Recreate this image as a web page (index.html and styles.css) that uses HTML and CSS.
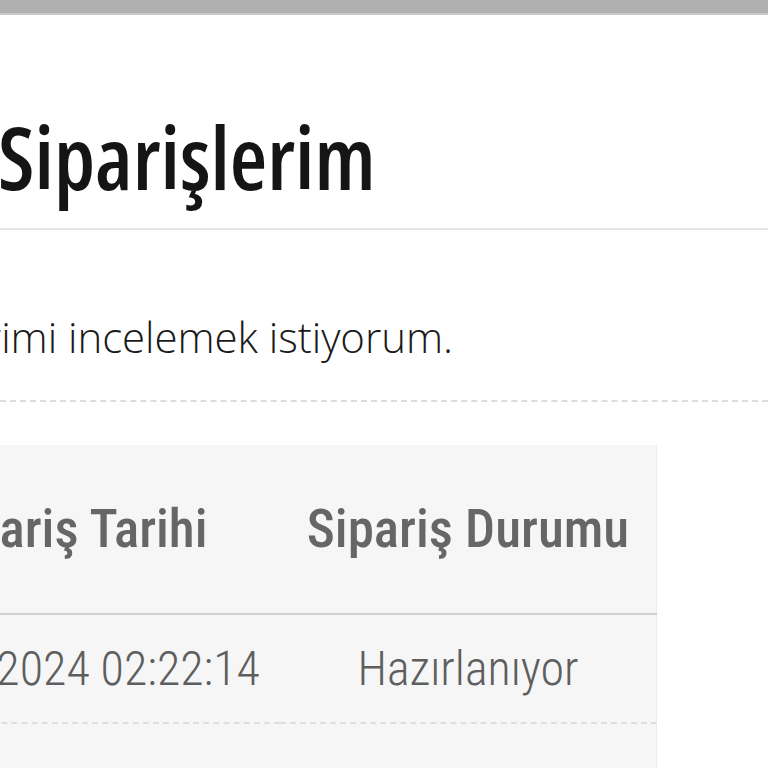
FILE: index.html
```html
<!DOCTYPE html>
<html lang="tr">
<head>
<meta charset="utf-8">
<title>Siparişlerim</title>
<link rel="stylesheet" href="styles.css">
</head>
<body>
<div class="topbar"></div>
<main class="page">
  <header class="title-block">
    <h1 class="title">Siparişlerim</h1>
  </header>
  <section class="intro">
    <div class="intro-line"><p class="intro-text">Siparişlerimi incelemek istiyorum.</p></div>
  </section>
  <div class="table-wrap">
    <table class="orders">
      <thead>
        <tr>
          <th class="col-date">Sipariş Tarihi</th>
          <th class="col-status">Sipariş Durumu</th>
        </tr>
      </thead>
      <tbody>
        <tr>
          <td class="col-date">15.03.2024 02:22:14</td>
          <td class="col-status">Hazırlanıyor</td>
        </tr>
        <tr class="empty-row">
          <td class="col-date">&nbsp;</td>
          <td class="col-status">&nbsp;</td>
        </tr>
      </tbody>
    </table>
  </div>
</main>
</body>
</html>
```
FILE: styles.css
```css
html, body {
  margin: 0;
  padding: 0;
  background: #ffffff;
  overflow: hidden;
  width: 768px;
  height: 768px;
}

.topbar {
  height: 13px;
  background: #b0b0b0;
  border-bottom: 2px solid #c9c9c9;
}

.page {
  display: flex;
  flex-direction: column;
}

.title-block {
  padding-top: 90px;
  padding-bottom: 20px;
  border-bottom: 2px solid #e6e6e6;
}

.title {
  margin: 0 0 0 -2px;
  font-family: "Open Sans", Lato, sans-serif;
  font-weight: 600;
  font-stretch: 85%;
  font-size: 86px;
  line-height: 103px;
  color: #151515;
}

.intro {
  padding-top: 77px;
  padding-bottom: 33px;
  border-bottom: 2px dashed #dcdcdc;
}

.intro-line {
  width: 453px;
  display: flex;
  justify-content: flex-end;
}

.intro-text {
  margin: 0;
  white-space: nowrap;
  font-family: "Open Sans", Lato, sans-serif;
  font-weight: 300;
  font-size: 42px;
  letter-spacing: -0.05px;
  line-height: 60px;
  color: #1a1a1a;
}

.table-wrap {
  padding-top: 43px;
}

.orders {
  margin-left: -140px;
  border-collapse: collapse;
  background: #f6f6f6;
  border-right: 1px solid #ececec;
  font-family: Roboto, "DejaVu Sans Condensed", sans-serif;
  font-stretch: 80%;
}

.col-date {
  width: 420px;
}

.col-status {
  width: 376px;
}

.orders th {
  height: 168px;
  padding: 0;
  text-align: center;
  font-weight: 500;
  font-size: 53px;
  color: #666666;
  border-bottom: 2px solid #d0d0d0;
}

.orders td {
  height: 107px;
  padding: 0;
  text-align: center;
  font-weight: 300;
  font-size: 48px;
  color: #5e5e5e;
  border-bottom: 2px dashed #dedede;
}
```
